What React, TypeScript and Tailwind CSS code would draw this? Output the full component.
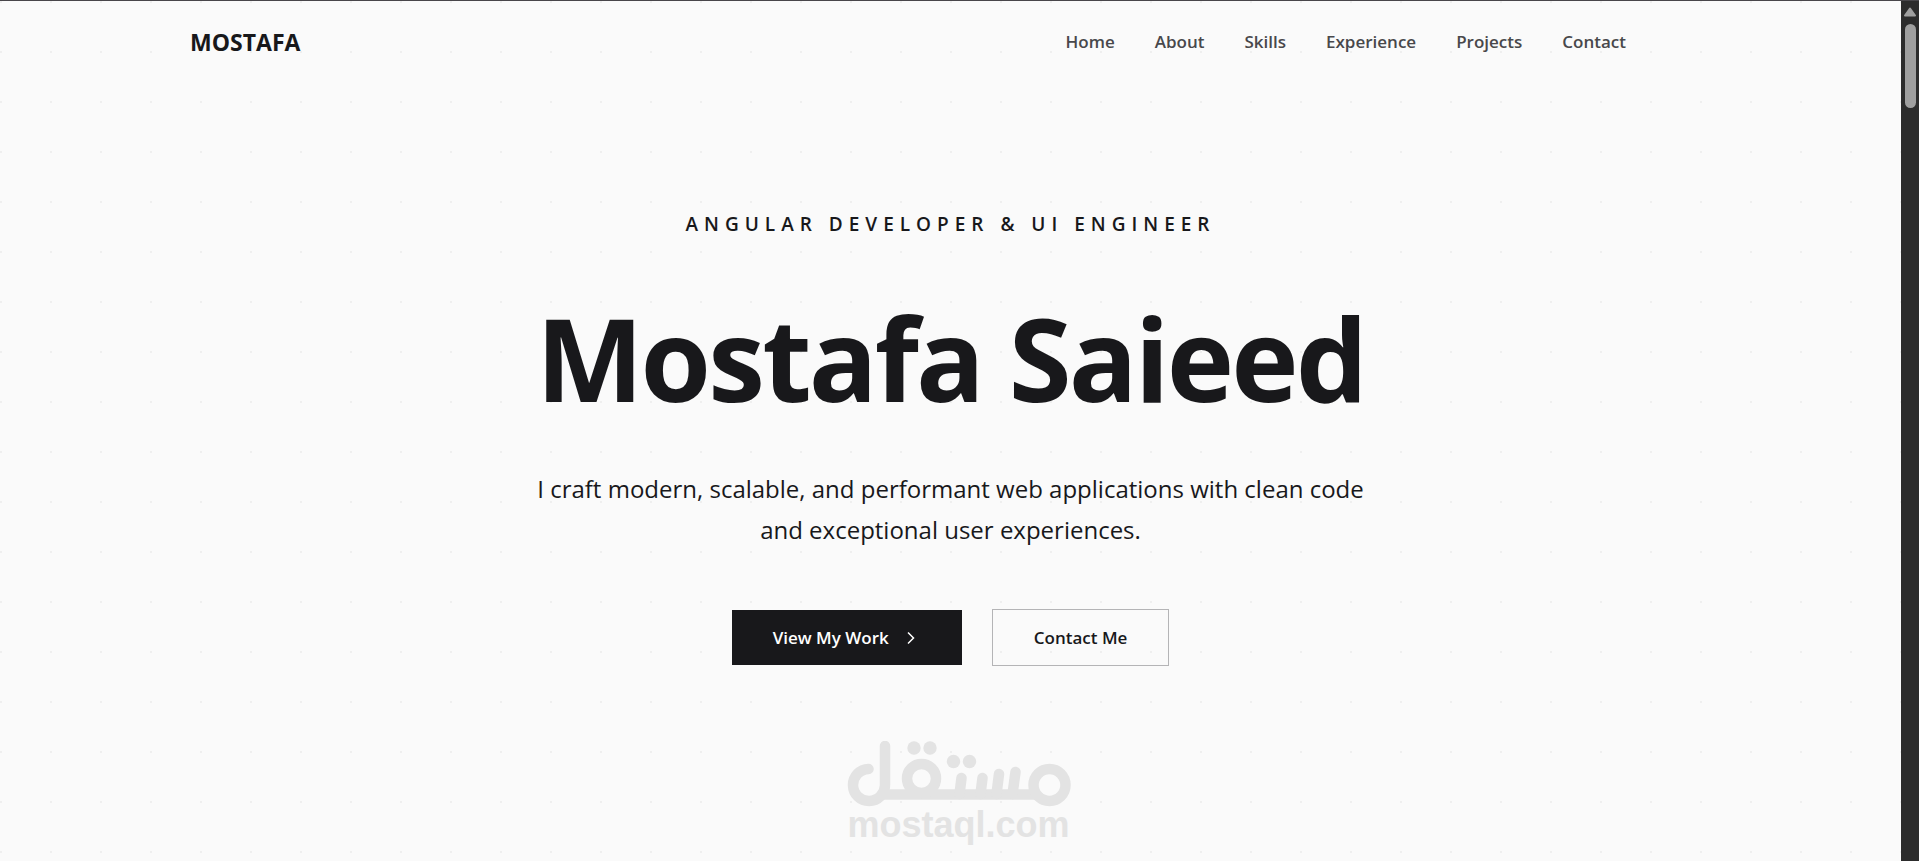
const links = ['Home', 'About', 'Skills', 'Experience', 'Projects', 'Contact'];

function Navbar() {
  return (
    <header className="flex h-[82px] items-center justify-between pl-[10%] pr-[275px]">
      <a href="#home" className="text-[23px] font-bold leading-8 text-[#18181b]">
        MOSTAFA
      </a>
      <nav className="flex gap-10">
        {links.map((link) => (
          <a
            key={link}
            href={`#${link.toLowerCase()}`}
            className="text-[17px] font-semibold leading-6 text-[#48484b]"
          >
            {link}
          </a>
        ))}
      </nav>
    </header>
  );
}

function Watermark() {
  return (
    <div className="flex flex-col items-center text-[#e3e3e3]">
      <svg width="224" height="66" viewBox="0 0 224 66" fill="none" stroke="currentColor" strokeWidth="10.500" strokeLinecap="round" strokeLinejoin="round" aria-hidden="true">
        {/* lam */}
        <path d="M21.500 28A16 16 0 1 0 38 44V5" />
        {/* baseline */}
        <path d="M36 53.500H190" strokeLinecap="butt" />
        {/* qaf, then meem */}
        <circle cx="74.500" cy="37.500" r="14.500" />
        <circle cx="202.500" cy="44" r="16" />
        {/* teeth */}
        <path d="M114.500 37L112.500 53M135.500 37L133.500 53M152 33L149.500 53M168.500 31L165.500 53" />
        <g fill="currentColor" stroke="none">
          <circle cx="67" cy="7" r="6.700" />
          <circle cx="83" cy="7" r="6.700" />
          <circle cx="106.500" cy="20.500" r="6.700" />
          <circle cx="122.500" cy="20.500" r="6.700" />
        </g>
      </svg>
      <span className="font-['Liberation_Sans',Arial,sans-serif] text-[36px] font-bold leading-9">mostaql.com</span>
    </div>
  );
}

function Hero() {
  return (
    <main id="home" className="flex flex-col items-center px-8 pt-[121px] text-center text-[#18181b]">
      <p className="text-[19px] font-semibold uppercase leading-10 tracking-[6px]">
        Angular Developer &amp; UI Engineer
      </p>
      <h1 className="mt-[48px] text-[114px] font-bold leading-[132px] tracking-tight">Mostafa Saieed</h1>
      <p className="mt-[44px] max-w-[840px] text-[24px] leading-[41px]">
        I craft modern, scalable, and performant web applications with clean code and exceptional user
        experiences.
      </p>
      <div className="mt-[59px] flex items-center gap-[30px]">
        <button className="flex h-[55px] items-center gap-3 bg-[#18181b] px-[41px] text-[17px] font-semibold text-white">
          View My Work
          <svg width="20" height="20" viewBox="0 0 20 20" fill="none" stroke="currentColor" strokeWidth="1.500" aria-hidden="true">
            <path d="M7 4.500L12.500 10L7 15.500" />
          </svg>
        </button>
        <button className="h-[57px] border border-[#b4b4b6] px-[41px] text-[17px] font-semibold">Contact Me</button>
      </div>
      <div className="ml-4 mt-[75px]">
        <Watermark />
      </div>
    </main>
  );
}

function Scrollbar() {
  return (
    <div className="flex w-[18px] shrink-0 flex-col items-center bg-[#2c2c2c] pt-[6px]" aria-hidden="true">
      <svg width="14" height="10" viewBox="0 0 14 10">
        <path d="M7 1.500L12 8.500H2Z" fill="#9f9f9f" stroke="#9f9f9f" strokeWidth="2" strokeLinejoin="round" />
      </svg>
      <div className="mt-[7px] h-[84px] w-[11px] rounded-full bg-[#9f9f9f]" />
    </div>
  );
}

export default function App() {
  return (
    <div className="flex min-h-screen flex-col border-t border-[#48464a] bg-[#fafafa] font-['Open_Sans','Noto_Sans',sans-serif]">
      <div className="flex flex-1">
        <div className="min-w-0 flex-1 bg-[radial-gradient(circle_at_1px_1px,#efefef_1px,transparent_0)] bg-[size:50px_50px]">
          <Navbar />
          <Hero />
        </div>
        <Scrollbar />
      </div>
    </div>
  );
}
